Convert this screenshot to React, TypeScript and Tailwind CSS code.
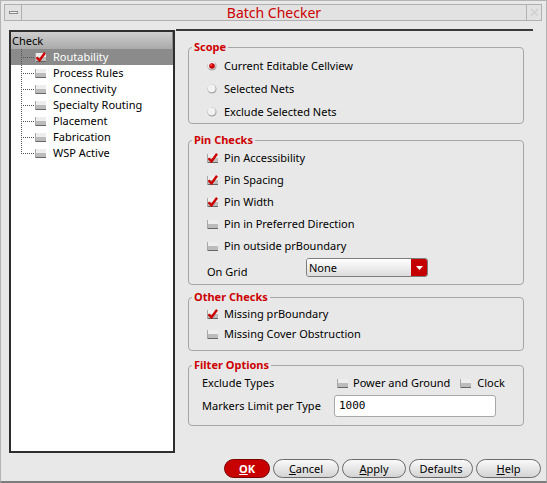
import React from 'react';

const CheckBox = ({ checked }: { checked?: boolean }) => (
  <svg width="11" height="10" viewBox="0 0 11 10" className="shrink-0">
    <rect x="0" y="1" width="11" height="9" fill="#ededed" />
    <rect x="0" y="5" width="11" height="4" fill="#bcbcbc" />
    <rect x="0" y="9" width="11" height="1" fill="#666" />
    <rect x="0" y="1" width="1" height="9" fill="#a8a8a8" />
    {checked && (
      <path d="M1.5 5.2 L4.5 8.4 L10 0.8" fill="none" stroke="#cc0000" strokeWidth="2.4" />
    )}
  </svg>
);

const Radio = ({ on }: { on?: boolean }) => (
  <svg width="10" height="10" viewBox="0 0 10 10" className="shrink-0">
    <circle cx="5" cy="5" r="4.6" fill="#a9a9a9" />
    <circle cx="4.6" cy="4.3" r="3.9" fill="#f2f2f2" />
    {on && <circle cx="5" cy="5" r="2.8" fill="#b00000" />}
    {on && <circle cx="4.7" cy="4.6" r="2" fill="#e00000" />}
    {on && <circle cx="4.2" cy="4" r="0.8" fill="#ff8080" />}
  </svg>
);

const Group = ({ title, className, children }: { title: string; className?: string; children: React.ReactNode }) => (
  <fieldset className={`border border-[#a6a6a6] rounded-[4px] ${className ?? ''}`}>
    <legend className="ml-[3px] px-[2px] text-[11px] leading-[14px] font-bold text-[#cc0000]">{title}</legend>
    {children}
  </fieldset>
);

const Option = ({ label, checked, h }: { label: string; checked?: boolean; h: string }) => (
  <div className={`flex items-center gap-[6px] pl-[18px] ${h}`}>
    <CheckBox checked={checked} />
    <span>{label}</span>
  </div>
);

const TreeLink = ({ last }: { last?: boolean }) => (
  <svg width="13" height="16" viewBox="0 0 13 16" className="shrink-0">
    <line x1="0.5" y1="0" x2="0.5" y2={last ? 8 : 16} stroke="#555" strokeDasharray="1 1" />
    <line x1="0" y1="8.5" x2="13" y2="8.5" stroke="#555" strokeDasharray="1 1" />
  </svg>
);

const checks = ['Routability', 'Process Rules', 'Connectivity', 'Specialty Routing', 'Placement', 'Fabrication', 'WSP Active'];

const Btn = ({ w, children, primary }: { w: string; children: React.ReactNode; primary?: boolean }) => (
  <button
    className={`${w} h-[19px] rounded-full border text-[11px] leading-[14px] flex items-center justify-center ${
      primary
        ? 'bg-[#c80000] border-[#7a0000] text-white font-bold'
        : 'bg-gradient-to-b from-[#fafafa] to-[#d4d4d4] border-[#6a6a6a] text-black'
    }`}
  >
    {children}
  </button>
);

export default function App() {
  return (
    <div className="w-[547px] h-[483px] bg-[#e8e8e8] border-l border-t border-r border-[#b4b4b4] border-b-2 border-b-[#7c7c7c] font-['Noto_Sans','DejaVu_Sans',sans-serif] text-[11px] leading-[14px] text-black flex flex-col overflow-hidden">
      {/* title bar */}
      <div className="mt-[3px] ml-[3px] mr-[4px] h-[17px] flex items-stretch border border-[#b0b0b0] bg-[#e2e2e2]">
        <div className="w-[17px] border-r border-[#b0b0b0] flex items-center justify-center">
          <div className="w-[9px] h-[3px] border border-[#8a8a8a] bg-[#f4f4f4]" />
        </div>
        <div className="flex-1 text-center text-[14px] leading-[15px] text-[#cc0000]">Batch Checker</div>
        <div className="w-[15px] border-l border-[#b0b0b0] flex items-center justify-center">
          <svg width="9" height="9" viewBox="0 0 9 9">
            <path d="M1 1 L8 8 M8 1 L1 8" stroke="#cfcfcf" strokeWidth="1.4" />
          </svg>
        </div>
      </div>

      {/* body */}
      <div className="mt-[8px] flex h-[424px]">
        <div className="ml-[8px] mt-[1px] w-[166px] h-[423px] border-2 border-[#2e2e2e] bg-white">
          <div className="h-[17px] bg-gradient-to-b from-[#cfcfcf] to-[#a9a9a9] border-r border-[#8a8a8a] pl-[1px] flex items-center">
            Check
          </div>
          {checks.map((c, i) => (
            <div
              key={c}
              className={`h-[16px] flex items-center pl-[10px] ${i === 0 ? 'bg-[#8b8b8b] text-white' : ''}`}
            >
              <TreeLink last={i === checks.length - 1} />
              <div className="ml-[1px]">
                <CheckBox checked={i === 0} />
              </div>
              <span className="ml-[7px]">{c}</span>
            </div>
          ))}
        </div>

        <div className="ml-[1px] w-[357px] border-t-2 border-[#3a3a3a] pl-[12px] pr-[9px] flex flex-col">
          <Group title="Scope" className="mt-[9px]">
            {[
              ['Current Editable Cellview', true],
              ['Selected Nets', false],
              ['Exclude Selected Nets', false],
            ].map(([label, on]) => (
              <div key={label as string} className="h-[23px] flex items-center gap-[7px] pl-[18px]">
                <Radio on={on as boolean} />
                <span>{label as string}</span>
              </div>
            ))}
          </Group>

          <Group title="Pin Checks" className="mt-[9px]">
            <Option h="h-[22px]" label="Pin Accessibility" checked />
            <Option h="h-[22px]" label="Pin Spacing" checked />
            <Option h="h-[22px]" label="Pin Width" checked />
            <Option h="h-[22px]" label="Pin in Preferred Direction" />
            <Option h="h-[22px]" label="Pin outside prBoundary" />
            <div className="h-[27px] flex items-start pl-[18px]">
              <span className="mt-[8px] w-[99px]">On Grid</span>
              <div className="mt-[1px] w-[122px] h-[19px] flex rounded-[3px] border border-[#7c7c7c] overflow-hidden">
                <div className="flex-1 bg-gradient-to-b from-[#ffffff] to-[#dcdcdc] pl-[2px] flex items-center">None</div>
                <div className="w-[16px] bg-[#c40000] flex items-center justify-center">
                  <svg width="7" height="4" viewBox="0 0 7 4">
                    <path d="M0 0 H7 L3.5 4 Z" fill="#fff" />
                  </svg>
                </div>
              </div>
            </div>
          </Group>

          <Group title="Other Checks" className="mt-[5px] pb-[6px]">
            <Option h="h-[20px]" label="Missing prBoundary" checked />
            <Option h="h-[20px]" label="Missing Cover Obstruction" />
          </Group>

          <Group title="Filter Options" className="mt-[7px] pb-[8px]">
            <div className="h-[22px] flex items-center pl-[13px]">
              <span className="w-[135px]">Exclude Types</span>
              <CheckBox />
              <span className="ml-[5px]">Power and Ground</span>
              <div className="ml-[10px]">
                <CheckBox />
              </div>
              <span className="ml-[6px]">Clock</span>
            </div>
            <div className="h-[23px] flex items-center pl-[13px]">
              <span className="w-[132px]">Markers Limit per Type</span>
              <div className="w-[162px] h-[22px] bg-white border border-[#a8a8a8] rounded-[3px] pl-[4px] flex items-center font-['DejaVu_Sans_Mono',monospace] text-[11px]">
                1000
              </div>
            </div>
          </Group>
        </div>
      </div>

      {/* buttons */}
      <div className="mt-[6px] flex gap-[3px] pl-[223px]">
        <Btn w="w-[46px]" primary>
          <span><u>O</u>K</span>
        </Btn>
        <Btn w="w-[66px]">
          <span><u>C</u>ancel</span>
        </Btn>
        <Btn w="w-[64px]">
          <span><u>A</u>pply</span>
        </Btn>
        <Btn w="w-[64px]">Defaults</Btn>
        <Btn w="w-[65px]">
          <span><u>H</u>elp</span>
        </Btn>
      </div>
    </div>
  );
}
